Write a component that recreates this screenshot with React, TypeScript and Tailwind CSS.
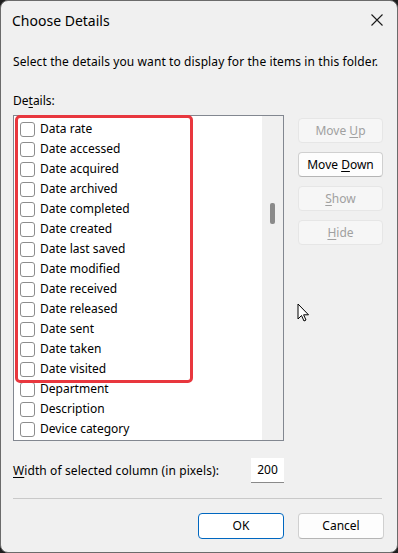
import React from 'react'

const items = [
  'Data rate',
  'Date accessed',
  'Date acquired',
  'Date archived',
  'Date completed',
  'Date created',
  'Date last saved',
  'Date modified',
  'Date received',
  'Date released',
  'Date sent',
  'Date taken',
  'Date visited',
  'Department',
  'Description',
  'Device category',
]

function SideButton({ children, enabled }: { children: React.ReactNode; enabled?: boolean }) {
  return (
    <div
      className={`flex h-[25px] w-[85px] items-center justify-center rounded-[4px] border text-[12px] ${
        enabled
          ? 'border-[#d0d0d0] border-b-[#b5b5b5] bg-[#fdfdfd] text-black'
          : 'border-[#e6e6e6] bg-[#f6f6f6] text-[#a0a0a0]'
      }`}
    >
      <span>{children}</span>
    </div>
  )
}

export default function App() {
  return (
    <div className="h-[553px] w-[398px] bg-[#1e1e1e] font-['Noto_Sans',sans-serif]">
      <div className="relative flex h-full flex-col rounded-[8px] border border-[#6b6b6b] bg-[#f0f0f0] text-black">
        {/* title bar */}
        <div className="flex h-[38px] items-center justify-between pl-[11px] pr-[14px]">
          <span className="text-[14px]">Choose Details</span>
          <svg width="12" height="12" viewBox="0 0 12 12">
            <path d="M0.5 0.5 L11.5 11.5 M11.5 0.5 L0.5 11.5" stroke="#1a1a1a" strokeWidth="1.1" />
          </svg>
        </div>

        <div className="px-[12px]">
          <div className="mt-[14px] text-[12px] leading-[18px] tracking-[0.1px]">
            Select the details you want to display for the items in this folder.
          </div>
          <div className="mt-[21px] text-[12px] leading-[18px]">
            De<span className="underline underline-offset-2">t</span>ails:
          </div>

          <div className="mt-[5px] flex">
            {/* list box */}
            <div className="relative flex h-[326px] w-[271px] border border-[#828790] bg-white">
              <div className="flex-1 pt-[3px]">
                {items.map((item) => (
                  <div key={item} className="flex h-[20px] items-center pl-[6px]">
                    <div className="h-[15px] w-[15px] rounded-[3px] border border-[#8d8d8d] bg-white" />
                    <span className="ml-[5px] text-[12px]">{item}</span>
                  </div>
                ))}
              </div>
              <div className="w-[21px] bg-[#f0f0f0] pt-[87px]">
                <div className="mx-auto h-[21px] w-[5px] rounded-[2px] bg-[#8a8a8a]" />
              </div>
              {/* highlight */}
              <div className="absolute left-[1px] top-[-1px] h-[268px] w-[178px] rounded-[5px] border-[3px] border-[#e8373e]" />
            </div>

            <div className="ml-[14px] flex flex-col gap-[9px] pt-[3px]">
              <SideButton>
                Move <span className="underline underline-offset-2">U</span>p
              </SideButton>
              <SideButton enabled>
                Move <span className="underline underline-offset-2">D</span>own
              </SideButton>
              <SideButton>
                <span className="underline underline-offset-2">S</span>how
              </SideButton>
              <SideButton>
                <span className="underline underline-offset-2">H</span>ide
              </SideButton>
            </div>
          </div>

          <div className="mt-[17px] flex items-center">
            <span className="text-[12px] tracking-[0.1px]">
              <span className="underline underline-offset-2">W</span>idth of selected column (in pixels):
            </span>
            <div className="ml-auto mr-[101px] flex h-[25px] w-[33px] items-center justify-center border-b border-[#8a8a8a] bg-white text-[12px]">
              200
            </div>
          </div>

          <div className="mr-[3px] mt-[15px] h-px bg-[#c9c9c9]" />

          <div className="mt-[14px] flex justify-end gap-[14px] pr-[1px]">
            <div className="flex h-[26px] w-[86px] items-center justify-center rounded-[4px] border border-[#0067c0] bg-white text-[12px]">
              OK
            </div>
            <div className="flex h-[26px] w-[86px] items-center justify-center rounded-[4px] border border-[#d0d0d0] border-b-[#b5b5b5] bg-[#fdfdfd] text-[12px]">
              Cancel
            </div>
          </div>
        </div>

        {/* mouse pointer */}
        <svg className="absolute left-[296px] top-[302px]" width="13" height="20" viewBox="0 0 13 20">
          <path
            d="M1 1 L1 16 L4.5 12.5 L7 18 L9 17 L6.6 11.8 L11.5 11.8 Z"
            fill="white"
            stroke="black"
            strokeWidth="1"
            strokeLinejoin="miter"
          />
        </svg>
      </div>
    </div>
  )
}
